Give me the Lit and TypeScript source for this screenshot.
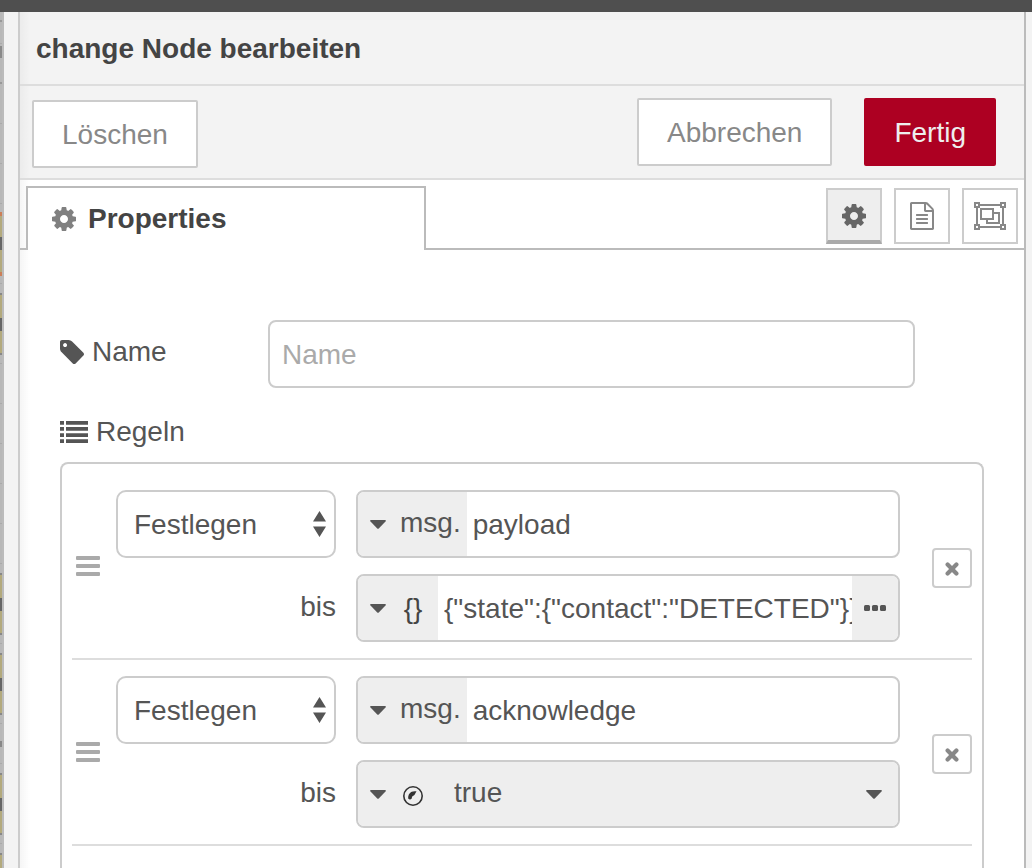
import { LitElement, html, css, svg, nothing } from "lit";
import { customElement, property } from "lit/decorators.js";

const cog = svg`<path d="M1024 640q0-106-75-181t-181-75-181 75-75 181 75 181 181 75 181-75 75-181zm512-109v222q0 12-8 23t-20 13l-185 28q-19 54-39 91 35 50 107 138 10 12 10 25t-9 23q-27 37-99 108t-94 71q-12 0-26-9l-138-108q-44 23-91 38-16 136-29 186-7 28-36 28h-222q-14 0-24.5-8.5t-11.5-21.5l-28-184q-49-16-90-37l-141 107q-10 9-25 9-14 0-25-11-126-114-165-168-7-10-7-23 0-12 8-23 15-21 51-66.5t54-70.5q-27-50-41-99l-183-27q-13-2-21-12.5t-8-23.5v-222q0-12 8-23t19-13l186-28q14-46 39-92-40-57-107-138-10-12-10-24 0-10 9-23 26-36 98.5-107.5t94.5-71.5q13 0 26 10l138 107q44-23 91-38 16-136 29-186 7-28 36-28h222q14 0 24.5 8.5t11.5 21.5l28 184q49 16 90 37l142-107q9-9 24-9 13 0 25 10 129 119 165 170 7 8 7 22 0 12-8 23-15 21-51 66.5t-54 70.5q26 50 41 98l183 28q13 2 21 12.5t8 23.5z"/>`;

const icons = {
  cog: html`<svg width="24" height="24" viewBox="0 -128 1536 1536" fill="currentColor" aria-hidden="true">${cog}</svg>`,
  doc: html`<svg width="24" height="28" viewBox="0 0 1536 1792" fill="currentColor" aria-hidden="true"><path d="M1468 380q28 28 48 76t20 88v1152q0 40-28 68t-68 28h-1344q-40 0-68-28t-28-68v-1600q0-40 28-68t68-28h896q40 0 88 20t76 48zm-444-244v376h376q-10-29-22-41l-313-313q-12-12-41-22zm384 1528v-1024h-416q-40 0-68-28t-28-68v-416h-768v1536h1280zm-1024-864q0-14 9-23t23-9h704q14 0 23 9t9 23v64q0 14-9 23t-23 9h-704q-14 0-23-9t-9-23v-64zm736 224q14 0 23 9t9 23v64q0 14-9 23t-23 9h-704q-14 0-23-9t-9-23v-64q0-14 9-23t23-9h704zm0 256q14 0 23 9t9 23v64q0 14-9 23t-23 9h-704q-14 0-23-9t-9-23v-64q0-14 9-23t23-9h704z"/></svg>`,
  group: html`<svg width="32" height="28" viewBox="0 0 32 28" fill="none" stroke="currentColor" stroke-width="2" aria-hidden="true">
    <path d="M6 3H26M6 25H26M3 6V22M29 6V22"/>
    <path d="M1 1H5V5H1zM27 1H31V5H27zM1 23H5V27H1zM27 23H31V27H27z"/>
    <path d="M7 7H19V17H7zM19 11H25V21H13V17"/></svg>`,
  tag: html`<svg width="24" height="24" viewBox="0 128 1515 1515" fill="currentColor" aria-hidden="true"><path d="M448 448q0-53-37.5-90.5t-90.5-37.5-90.5 37.5-37.5 90.5 37.5 90.5 90.5 37.5 90.5-37.5 37.5-90.5zm1067 576q0 53-37 90l-491 492q-39 37-91 37-53 0-90-37l-715-716q-38-37-64.5-101t-26.5-117v-416q0-52 38-90t90-38h416q53 0 117 26.5t102 64.5l715 714q37 39 37 91z"/></svg>`,
  list: html`<svg width="28" height="22" viewBox="0 0 28 22" fill="currentColor" aria-hidden="true"><path d="M0 0h4v3.7H0zM6 0h22v3.7H6zM0 6.1h4v3.7H0zM6 6.1h22v3.7H6zM0 12.2h4v3.7H0zM6 12.2h22v3.7H6zM0 18.3h4V22H0zM6 18.3h22V22H6z"/></svg>`,
  caret: html`<svg width="16" height="9" viewBox="0 0 16 9" fill="currentColor" aria-hidden="true"><path d="M1 0H15Q16.500 .3 15.500 1.500L9 8.300Q8 9.300 7 8.300L.5 1.500Q-.5 .3 1 0z"/></svg>`,
  bars: html`<svg width="24" height="20" viewBox="0 0 24 20" fill="currentColor" aria-hidden="true"><rect width="24" height="4" rx="1"/><rect y="8" width="24" height="4" rx="1"/><rect y="16" width="24" height="4" rx="1"/></svg>`,
  times: html`<svg width="14" height="14" viewBox="0 0 14 14" stroke="currentColor" stroke-width="4.200" stroke-linecap="round" aria-hidden="true"><path d="M2.600 2.600L11.400 11.400M11.400 2.600L2.600 11.400"/></svg>`,
  dots: html`<svg width="22" height="6" viewBox="0 0 22 6" fill="currentColor" aria-hidden="true"><rect width="6" height="6" rx="1.500"/><rect x="8" width="6" height="6" rx="1.500"/><rect x="16" width="6" height="6" rx="1.500"/></svg>`,
  updown: html`<svg class="updown" width="13" height="26" viewBox="0 0 13 26" fill="currentColor" aria-hidden="true"><path d="M6.500 0L13 10.500H0zM0 15.500H13L6.500 26z"/></svg>`,
  bool: html`<svg width="20" height="20" viewBox="0 0 20 20" aria-hidden="true"><circle cx="10" cy="10" r="9.200" fill="none" stroke="#333" stroke-width="1.600"/><path d="M13.500 5.300C8 4.300 4.600 8 5.300 12.800Q7 14.300 8.600 12.800L9.200 10.600Q12 9.300 13.500 5.300z" fill="#333"/></svg>`,
};

interface Rule {
  target: string;
  kind: "json" | "bool";
  value: string;
}

const shared = css`
  * { box-sizing: border-box; }
  button, input, select {
    font: inherit;
    color: inherit;
    margin: 0;
    border-radius: 0;
    outline: none;
  }
  button { cursor: pointer; }
  svg { display: block; flex: none; }
`;

@customElement("typed-input")
export class TypedInput extends LitElement {
  @property() kind: "msg" | "json" | "bool" = "msg";
  @property() value = "";
  @property() name = "";

  static styles = [shared, css`
    :host { display: block; min-width: 0; }
    .box {
      display: flex;
      height: 68px;
      border: 2px solid #ccc;
      border-radius: 8px;
      overflow: hidden;
      background: #fff;
      color: #555;
    }
    .type {
      display: flex;
      align-items: center;
      gap: 12px;
      padding: 0 6px 0 12px;
      border: 0;
      background: #eee;
      flex: none;
    }
    .prefix { padding: 0 0 2px 2px; }
    .symbol {
      display: flex;
      justify-content: center;
      width: 34px;
      padding: 2px 4px 0 0;
      color: #444;
    }
    .bool-symbol { padding-top: 4px; }
    .value {
      flex: 1;
      min-width: 0;
      padding: 2px 0 0 6px;
      border: 0;
      background: transparent;
    }
    .more {
      display: grid;
      place-items: center;
      width: 46px;
      padding: 0;
      border: 0;
      background: #eee;
      flex: none;
    }
    .choice { display: grid; flex: 1; align-items: center; background: #eee; }
    .choice select {
      grid-area: 1 / 1;
      width: 100%;
      height: 100%;
      padding: 0 48px 2px 16px;
      border: 0;
      appearance: none;
      background: transparent;
    }
    .choice svg {
      grid-area: 1 / 1;
      justify-self: end;
      margin-right: 16px;
      pointer-events: none;
    }
  `];

  private symbol() {
    if (this.kind === "msg") return html`<span class="prefix">msg.</span>`;
    if (this.kind === "json") return html`<span class="symbol">{}</span>`;
    return html`<span class="symbol bool-symbol">${icons.bool}</span>`;
  }

  render() {
    return html`<div class="box">
      <button class="type" type="button" aria-label="Typ">${icons.caret}${this.symbol()}</button>
      ${this.kind === "bool"
        ? html`<div class="choice">
            <select aria-label=${this.name}>
              <option ?selected=${this.value === "true"}>true</option>
              <option ?selected=${this.value === "false"}>false</option>
            </select>${icons.caret}
          </div>`
        : html`<input class="value" type="text" aria-label=${this.name} .value=${this.value} />`}
      ${this.kind === "json"
        ? html`<button class="more" type="button" aria-label="Erweitern">${icons.dots}</button>`
        : nothing}
    </div>`;
  }
}

@customElement("rule-row")
export class RuleRow extends LitElement {
  @property({ attribute: false }) rule!: Rule;

  static styles = [shared, css`
    :host {
      display: grid;
      grid-template-columns: 24px minmax(0, 1fr) 40px;
      align-items: center;
      padding: 16px 0 16px 4px;
      border-bottom: 2px solid #ddd;
    }
    .handle { color: #aaa; }
    .fields {
      display: grid;
      grid-template-columns: 220px minmax(0, 1fr);
      gap: 16px 20px;
      align-items: center;
      padding: 0 32px 0 16px;
    }
    .action { display: grid; align-items: center; }
    .action select {
      grid-area: 1 / 1;
      width: 100%;
      height: 68px;
      padding: 2px 32px 0 16px;
      border: 2px solid #ccc;
      border-radius: 10px;
      appearance: none;
      background: #fff;
    }
    .updown {
      grid-area: 1 / 1;
      justify-self: end;
      margin-right: 10px;
      pointer-events: none;
    }
    .to { text-align: right; padding-bottom: 2px; }
    .remove {
      display: grid;
      place-items: center;
      width: 40px;
      height: 40px;
      margin-top: 4px;
      padding: 2px 0 0;
      border: 2px solid #ccc;
      border-radius: 4px;
      background: #fff;
      color: #888;
    }
  `];

  render() {
    return html`
      <span class="handle">${icons.bars}</span>
      <div class="fields">
        <div class="action">
          <select aria-label="Aktion">
            <option>Festlegen</option>
            <option>Ändern</option>
            <option>Löschen</option>
          </select>${icons.updown}
        </div>
        <typed-input kind="msg" name="Eigenschaft" .value=${this.rule.target}></typed-input>
        <span class="to">bis</span>
        <typed-input .kind=${this.rule.kind} name="bis" .value=${this.rule.value}></typed-input>
      </div>
      <button class="remove" type="button" aria-label="Regel entfernen">${icons.times}</button>
    `;
  }
}

@customElement("app-root")
export class AppRoot extends LitElement {
  private rules: Rule[] = [
    { target: "payload", kind: "json", value: '{"state":{"contact":"DETECTED"}}' },
    { target: "acknowledge", kind: "bool", value: "true" },
  ];

  static styles = [shared, css`
    :host {
      display: flex;
      flex-direction: column;
      height: 100vh;
      overflow: hidden;
      background: #f3f3f3;
      color: #555;
      font: 28px/40px "Liberation Sans", Arial, sans-serif;
    }
    .topbar { height: 12px; background: #4f4f4f; flex: none; }
    .main { display: flex; flex: 1; min-height: 0; }
    .canvas {
      width: 4px;
      overflow: hidden;
      border-right: 2px solid #bbb;
      background: #b8b8b8;
      flex: none;
    }
    .tray {
      display: flex;
      flex-direction: column;
      flex: 1;
      min-width: 0;
      margin: 0 6px 0 14px;
      border-left: 2px solid #ccc;
      border-right: 2px solid #bbb;
      background: linear-gradient(to right, rgba(0, 0, 0, 0.04), transparent 10px) #fff;
    }
    .header {
      margin: 0;
      padding: 17px 16px 15px;
      border-bottom: 2px solid #ddd;
      background: linear-gradient(to right, rgba(0, 0, 0, 0.03), transparent 10px) #f3f3f3;
      color: #444;
      font-size: 28px;
      line-height: 40px;
    }
    .toolbar {
      display: flex;
      justify-content: space-between;
      padding: 12px 28px 12px 12px;
      border-bottom: 2px solid #ddd;
      background: linear-gradient(to right, rgba(0, 0, 0, 0.03), transparent 10px) #f3f3f3;
    }
    .start { padding-top: 2px; margin-bottom: -2px; }
    .end { display: flex; gap: 32px; }
    .btn {
      height: 68px;
      padding: 2px 28px 0;
      border: 2px solid #ccc;
      border-radius: 2px;
      background: #fff;
      color: #888;
    }
    .primary { border-color: #ad0022; background: #ad0022; color: #eee; }
    .tabs {
      display: flex;
      justify-content: space-between;
      height: 70px;
      padding: 6px 6px 0;
      border-bottom: 2px solid #bbb;
    }
    .tab {
      display: flex;
      align-items: center;
      gap: 12px;
      width: 400px;
      height: 64px;
      padding: 0 24px;
      border: 2px solid #bbb;
      border-bottom: 0;
      background: #fff;
      color: #444;
      font-weight: bold;
    }
    .tab svg { color: #808080; }
    .views { display: flex; gap: 12px; padding-top: 2px; }
    .view {
      display: grid;
      place-items: center;
      width: 56px;
      height: 56px;
      padding: 0;
      border: 2px solid #ccc;
      background: #fff;
      color: #888;
    }
    .selected {
      padding-top: 2px;
      border-bottom: 4px solid #aaa;
      background: #eee;
      color: #666;
    }
    .form { flex: 1; min-height: 0; padding: 70px 40px 0; display: flex; flex-direction: column; }
    .row { display: flex; align-items: center; }
    .label { display: flex; align-items: center; gap: 8px; }
    .name-label { width: 208px; padding-bottom: 4px; }
    .name {
      width: 70%;
      height: 68px;
      padding: 2px 12px 0;
      border: 2px solid #ccc;
      border-radius: 8px;
      background: #fff;
    }
    .name::placeholder { color: #aaa; opacity: 1; }
    .rules-label { margin: 24px 0 10px; }
    .rules {
      flex: 1 0 auto;
      padding: 10px;
      border: 2px solid #ccc;
      border-bottom: 0;
      border-radius: 8px 8px 0 0;
    }
  `];

  private canvas() {
    const nodes = [
      { y: 200, height: 64, line: 4, stroke: "#cc7f58" },
      ...[281, 561, 641, 761, 841].map((y) => ({ y, height: 62, line: 2, stroke: "#888" })),
    ];
    const grid = Array.from({ length: 22 }, (_, i) => i * 40 + 31);
    return html`<svg width="2" height="856" viewBox="0 0 2 856" aria-hidden="true">
      ${grid.map((y) => svg`<rect y=${y} width="2" height="1" fill="#aaa"/>`)}
      <rect y="8" width="2" height="2" fill="#999"/>
      <rect y="70" width="2" height="2" fill="#999"/>
      <rect y="34" width="2" height="12" fill="#8a8a8a"/>
      <rect y="729" width="2" height="6" fill="#888"/>
      ${nodes.map((n) => svg`<rect y=${n.y} width="2" height=${n.height} fill=${n.stroke}/>
        <rect y=${n.y + n.line} width="2" height=${n.height - 2 * n.line} fill="#b3aa7d"/>
        <rect y=${n.y + 25} width="2" height="13" fill="#666"/>`)}
    </svg>`;
  }

  render() {
    return html`
      <div class="topbar"></div>
      <div class="main">
        <div class="canvas">${this.canvas()}</div>
        <section class="tray">
          <h1 class="header">change Node bearbeiten</h1>
          <div class="toolbar">
            <div class="start"><button class="btn" type="button">Löschen</button></div>
            <div class="end">
              <button class="btn" type="button">Abbrechen</button>
              <button class="btn primary" type="button">Fertig</button>
            </div>
          </div>
          <div class="tabs">
            <button class="tab" type="button">${icons.cog}<span>Properties</span></button>
            <div class="views">
              <button class="view selected" type="button" aria-label="Properties">${icons.cog}</button>
              <button class="view" type="button" aria-label="Beschreibung">${icons.doc}</button>
              <button class="view" type="button" aria-label="Darstellung">${icons.group}</button>
            </div>
          </div>
          <div class="form">
            <div class="row">
              <label class="label name-label" for="name">${icons.tag}Name</label>
              <input class="name" id="name" type="text" placeholder="Name" />
            </div>
            <div class="label rules-label">${icons.list}Regeln</div>
            <div class="rules">
              ${this.rules.map((r) => html`<rule-row .rule=${r}></rule-row>`)}
            </div>
          </div>
        </section>
      </div>
    `;
  }
}
